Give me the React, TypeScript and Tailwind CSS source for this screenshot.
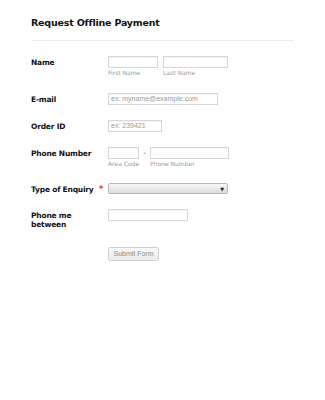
import React from "react";

const labelCls =
  "w-[77px] shrink-0 text-[7.5px] leading-[9px] font-bold text-[#111] tracking-[-0.2px] pt-[2px]";
const inputCls =
  "h-[12px] border border-[#d6d6d6] bg-white shadow-[inset_0_1px_1px_rgba(0,0,0,0.04)]";
const subCls = "text-[6px] leading-[8px] text-[#9a9a9a] mt-[1px]";

export default function App() {
  return (
    <div
      className="w-[325px] h-[400px] bg-white pl-[31px] pr-[31px] pt-[16px]"
      style={{ fontFamily: '"DejaVu Sans", Verdana, sans-serif' }}
    >
      <h1 className="text-[9.5px] leading-[13px] font-bold text-[#111] tracking-[-0.2px]">
        Request Offline Payment
      </h1>
      <div className="mt-[11px] border-t border-[#ececec]" />

      {/* Name */}
      <div className="mt-[15px] flex items-start">
        <div className={labelCls}>Name</div>
        <div className="flex gap-[5px]">
          <div className="flex flex-col">
            <div className={`${inputCls} w-[50px]`} />
            <div className={subCls}>First Name</div>
          </div>
          <div className="flex flex-col">
            <div className={`${inputCls} w-[65px]`} />
            <div className={subCls}>Last Name</div>
          </div>
        </div>
      </div>

      {/* E-mail */}
      <div className="mt-[16px] flex items-start">
        <div className={labelCls}>E-mail</div>
        <div
          className={`${inputCls} w-[110px] text-[7px] leading-[10px] text-[#9a9a9a] pl-[2px]`}
          style={{ fontFamily: '"Liberation Sans", Arial, sans-serif' }}
        >
          ex: myname@example.com
        </div>
      </div>

      {/* Order ID */}
      <div className="mt-[15px] flex items-start">
        <div className={labelCls}>Order ID</div>
        <div
          className={`${inputCls} w-[54px] text-[7px] leading-[10px] text-[#9a9a9a] pl-[2px]`}
          style={{ fontFamily: '"Liberation Sans", Arial, sans-serif' }}
        >
          ex: 239421
        </div>
      </div>

      {/* Phone Number */}
      <div className="mt-[15px] flex items-start">
        <div className={labelCls}>Phone Number</div>
        <div className="flex items-start">
          <div className="flex flex-col">
            <div className={`${inputCls} w-[31px]`} />
            <div className={subCls}>Area Code</div>
          </div>
          <div className="w-[11px] text-center text-[7px] leading-[12px] text-[#333]">
            -
          </div>
          <div className="flex flex-col">
            <div className={`${inputCls} w-[79px]`} />
            <div className={subCls}>Phone Number</div>
          </div>
        </div>
      </div>

      {/* Type of Enquiry */}
      <div className="mt-[15px] flex items-start">
        <div className={`${labelCls} flex items-start`}>
          <span className="whitespace-nowrap">Type of Enquiry</span>
          <span className="ml-auto mr-[5px] text-[#e33] text-[8px] leading-[9px]">*</span>
        </div>
        <div className="w-[120px] h-[11px] border border-[#b9b9b9] rounded-[2px] bg-gradient-to-b from-[#f7f7f7] to-[#dcdcdc] flex items-center justify-end pr-[3px]">
          <span className="text-[5px] leading-[6px] text-[#222]">▼</span>
        </div>
      </div>

      {/* Phone me between */}
      <div className="mt-[15px] flex items-start">
        <div className={labelCls}>
          Phone me
          <br />
          between
        </div>
        <div className={`${inputCls} w-[80px]`} />
      </div>

      {/* Submit */}
      <div className="mt-[18px] flex">
        <div className="w-[77px] shrink-0" />
        <div
          className="w-[51px] h-[14px] border border-[#cfcfcf] rounded-[2px] bg-gradient-to-b from-[#f8f8f8] to-[#ececec] text-[7px] leading-[12px] text-[#8a8a8a] text-center"
          style={{ fontFamily: '"Liberation Sans", Arial, sans-serif' }}
        >
          Submit Form
        </div>
      </div>
    </div>
  );
}
